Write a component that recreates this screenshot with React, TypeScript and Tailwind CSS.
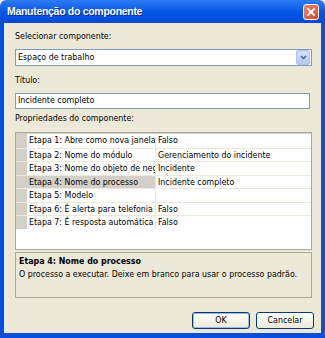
import React from "react";

const rows: [string, string][] = [
  ["Etapa 1: Abre como nova janela", "Falso"],
  ["Etapa 2: Nome do módulo", "Gerenciamento do incidente"],
  ["Etapa 3: Nome do objeto de negócio", "Incidente"],
  ["Etapa 4: Nome do processo", "Incidente completo"],
  ["Etapa 5: Modelo", ""],
  ["Etapa 6: É alerta para telefonia", "Falso"],
  ["Etapa 7: É resposta automática de e-mail", "Falso"],
];

export default function App() {
  const font = { fontFamily: '"DejaVu Sans Condensed", "Liberation Sans", sans-serif' };
  return (
    <div className="w-[325px] h-[338px] flex flex-col text-[8.8px] text-black" style={font}>
      <div className="h-[23px] flex items-center justify-between pl-[7px] pr-[6px] bg-gradient-to-b from-[#2f7bf5] via-[#0458e6] to-[#0048d8] rounded-t-[6px]">
        <span className="text-white font-bold text-[10.5px] leading-none tracking-[-0.3px]" style={{ fontFamily: '"Liberation Sans", Arial, sans-serif', textShadow: "1px 1px 0 #0a2d8a" }}>
          Manutenção do componente
        </span>
        <div className="w-[16px] h-[16px] mt-[1px] rounded-[3px] border border-white bg-gradient-to-br from-[#f0896a] to-[#d6431c] flex items-center justify-center">
          <svg width="10" height="10" viewBox="0 0 10 10">
            <path d="M2 2 L8 8 M8 2 L2 8" stroke="white" strokeWidth="1.8" strokeLinecap="square" />
          </svg>
        </div>
      </div>
      <div className="flex-1 flex flex-col bg-[#ECE9D8] border-x-4 border-b-[5px] border-[#0a4fdc] pl-[11px] pr-[9px]">
        <div className="mt-[7px] leading-[12px]">Selecionar componente:</div>
        <div className="mt-[7px] h-[17px] border border-[#7F9DB9] bg-white flex items-center">
          <span className="flex-1 pl-[2px]">Espaço de trabalho</span>
          <div className="w-[14px] h-[15px] mr-[1px] rounded-[2px] bg-gradient-to-b from-[#d4e0fc] to-[#b4c8f6] border border-[#b0c4f0] flex items-center justify-center">
            <svg width="7" height="5" viewBox="0 0 7 5">
              <path d="M1 1 L3.5 3.5 L6 1" stroke="#4d6185" strokeWidth="1.5" fill="none" />
            </svg>
          </div>
        </div>
        <div className="mt-[8px] leading-[12px]">Título:</div>
        <div className="mt-[7px] mr-[2px] h-[16px] border border-[#7F9DB9] bg-white flex items-center pl-[2px]">Incidente completo</div>
        <div className="mt-[3px] leading-[12px]">Propriedades do componente:</div>
        <div className="mt-[8px] h-[118px] border border-[#ACA899] bg-white flex flex-col">
          <div className="flex flex-col pt-[1px] bg-[#D4D0C8]">
            {rows.map(([k, v], i) => (
              <div key={i} className="flex h-[13.5px] bg-white border-t border-[#ECE9D8] first:border-t-0">
                <div className="w-[11px] shrink-0 bg-[#D4D0C8]" />
                <div className={`w-[129px] shrink-0 pl-[2px] whitespace-nowrap overflow-hidden leading-[13px] border-r border-[#ECE9D8] ${i === 3 ? "bg-[#D4D0C8]" : ""}`}>{k}</div>
                <div className="flex-1 pl-[2px] whitespace-nowrap overflow-hidden leading-[13px]">{v}</div>
              </div>
            ))}
          </div>
        </div>
        <div className="mt-[2px] h-[46px] border border-[#ACA899] pl-[3px] pt-[2px]">
          <div className="font-bold leading-[12px]">Etapa 4: Nome do processo</div>
          <div className="leading-[12px] mt-[1px] whitespace-nowrap">O processo a executar. Deixe em branco para usar o processo padrão.</div>
        </div>
        <div className="mt-[14px] flex justify-end gap-[6px] -mr-[2px]">
          {["OK", "Cancelar"].map((t, i) => (
            <div key={t} className={`w-[58px] h-[17px] rounded-[3px] border border-[#003C74] bg-gradient-to-b from-white to-[#ece9d8] flex items-center justify-center ${i === 0 ? "shadow-[inset_0_0_0_1px_#97b8f0]" : ""}`}>{t}</div>
          ))}
        </div>
      </div>
    </div>
  );
}
